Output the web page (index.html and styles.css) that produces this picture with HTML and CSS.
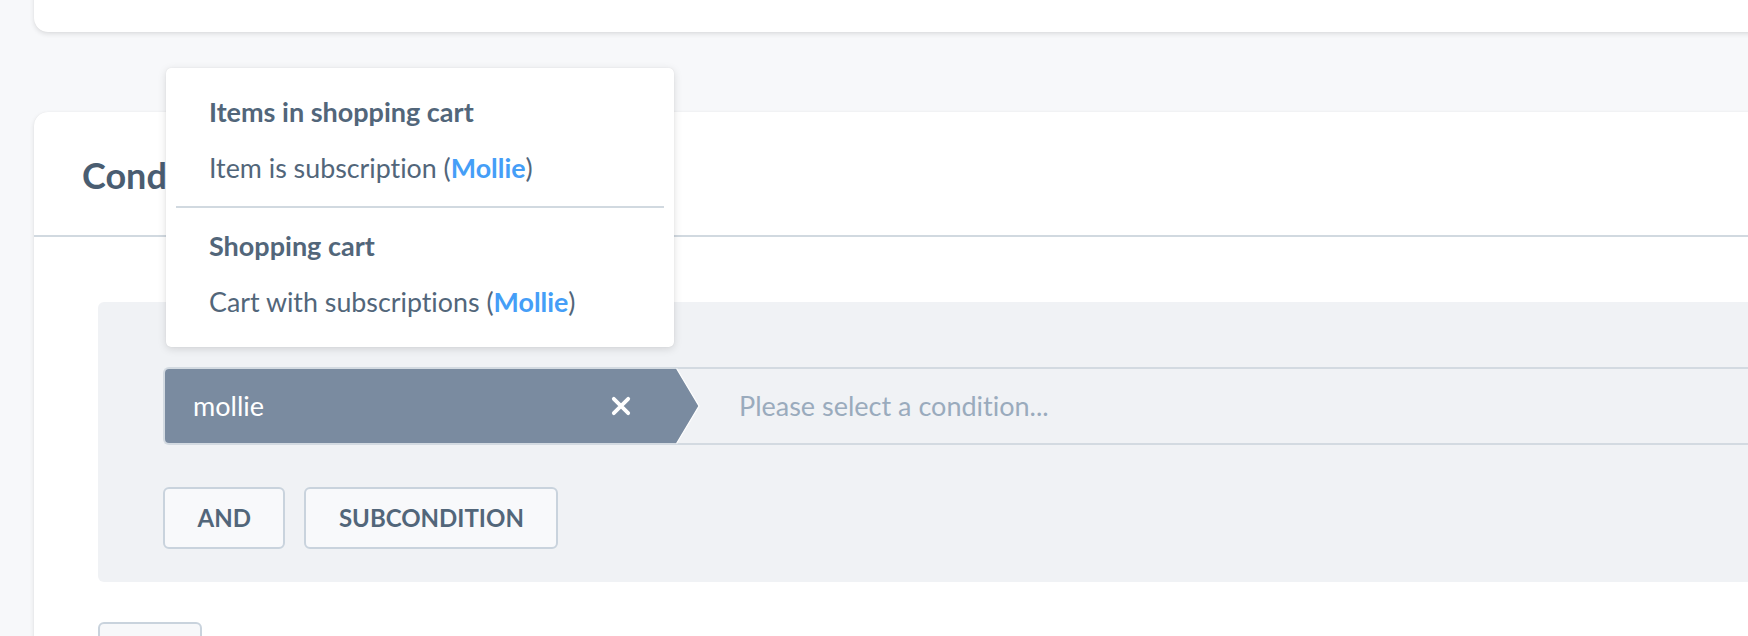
FILE: index.html
```html
<!DOCTYPE html>
<html lang="en">
<head>
<meta charset="utf-8">
<title>Rule conditions</title>
<link rel="stylesheet" href="styles.css">
</head>
<body>
<div class="page">
  <section class="card card--top"></section>
  <section class="card">
    <header class="card__header">
      <h2 class="card__title">Conditions</h2>
    </header>
    <div class="card__body">
      <div class="or-container">
        <div class="condition-row">
          <div class="chip">
            <span class="chip__label">mollie</span>
            <svg class="chip__clear" width="20" height="20" viewBox="0 0 20 20" aria-hidden="true">
              <path d="M2.8 2.8 L17.2 17.2 M17.2 2.8 L2.8 17.2" stroke="#ffffff" stroke-width="3.8" stroke-linecap="round" fill="none"/>
            </svg>
          </div>
          <svg class="chip__arrow" width="24" height="74" viewBox="0 0 24 74" aria-hidden="true">
            <path d="M0 0 H1 L23 37 L1 74 H0 Z" fill="#7a8ba0"/>
            <path d="M0.6 -0.5 L23 37 L0.6 74.5" stroke="#ffffff" stroke-width="1.3" fill="none"/>
          </svg>
          <span class="condition-placeholder">Please select a condition...</span>

          <div class="dropdown">
            <div class="dropdown__group">Items in shopping cart</div>
            <div class="dropdown__item">Item is subscription (<b class="brand">Mollie</b>)</div>
            <div class="dropdown__divider"></div>
            <div class="dropdown__group">Shopping cart</div>
            <div class="dropdown__item">Cart with subscriptions (<b class="brand">Mollie</b>)</div>
          </div>
        </div>
        <div class="actions">
          <button class="btn">AND</button>
          <button class="btn">SUBCONDITION</button>
        </div>
      </div>
      <button class="btn btn--or">OR</button>
    </div>
  </section>
</div>
</body>
</html>
```

FILE: styles.css
```css
* {
  box-sizing: border-box;
}

html, body {
  margin: 0;
  padding: 0;
}

body {
  background: #f7f8fa;
  font-family: Lato, "Open Sans", "Liberation Sans", sans-serif;
  font-variant-ligatures: none;
  color: #52667a;
  overflow: hidden;
  height: 636px;
}

.page {
  padding-left: 34px;
}

.card {
  background: #ffffff;
  border-radius: 14px;
  box-shadow: 0 2px 5px rgba(0, 0, 0, 0.11), 0 0 1px rgba(0, 0, 0, 0.08);
  margin-right: -120px;
  margin-top: 80px;
}

.card--top {
  height: 62px;
  margin-top: -30px;
}

.card__header {
  height: 125px;
  padding: 5px 48px 0;
  display: flex;
  align-items: center;
  border-bottom: 2px solid #d1d9e0;
}

.card__title {
  margin: 0;
  font-size: 36px;
  font-weight: 700;
  line-height: 1.2;
  color: #4a5d71;
}

.card__body {
  padding: 65px 0 40px 64px;
}

.or-container {
  background: #f0f2f5;
  border-radius: 6px;
  padding: 65px 0 33px 65px;
}

.condition-row {
  position: relative;
  display: flex;
  align-items: center;
  height: 78px;
  border: 2px solid #d3dae1;
  border-right: 0;
  border-radius: 6px 0 0 6px;
  background: #f0f2f5;
}

.chip {
  display: flex;
  align-items: center;
  width: 511px;
  height: 74px;
  padding: 0 45px 0 28px;
  background: #7a8ba0;
  border-radius: 4px 0 0 4px;
  color: #ffffff;
  font-size: 27px;
  line-height: 1.2;
}

.chip__label {
  flex: 1;
}

.chip__clear {
  display: block;
  flex: none;
}

.chip__arrow {
  display: block;
  flex: none;
  overflow: visible;
}

.condition-placeholder {
  margin-left: 39px;
  font-size: 27px;
  line-height: 1.2;
  color: #9aabbd;
}

.dropdown {
  position: absolute;
  left: 1px;
  bottom: calc(100% + 22px);
  width: 508px;
  padding: 16px 0 17px;
  background: #ffffff;
  border-radius: 5px;
  box-shadow: 0 2px 8px rgba(0, 0, 0, 0.13), 0 0 1px rgba(0, 0, 0, 0.12);
  z-index: 10;
}

.dropdown__group,
.dropdown__item {
  height: 56px;
  line-height: 56px;
  padding: 0 43px;
  white-space: nowrap;
  color: #52667a;
}

.dropdown__group {
  font-size: 27px;
  font-weight: 700;
}

.dropdown__item {
  font-size: 26.8px;
  font-weight: 400;
}

.brand {
  font-weight: 700;
  color: #459ef7;
}

.dropdown__divider {
  height: 2px;
  margin: 10px 10px;
  background: #d1d9e0;
}

.actions {
  display: flex;
  gap: 19px;
  margin-top: 42px;
}

.btn {
  display: inline-flex;
  align-items: center;
  justify-content: center;
  height: 62px;
  padding: 0 32.5px;
  border: 2px solid #c9d3dd;
  border-radius: 6px;
  background: #f8f9fb;
  font-family: Lato, "Open Sans", "Liberation Sans", sans-serif;
  font-size: 24px;
  font-weight: 700;
  line-height: 1.2;
  color: #52667a;
}

.btn--or {
  margin-top: 40px;
  background: #f7f8fa;
}
```
